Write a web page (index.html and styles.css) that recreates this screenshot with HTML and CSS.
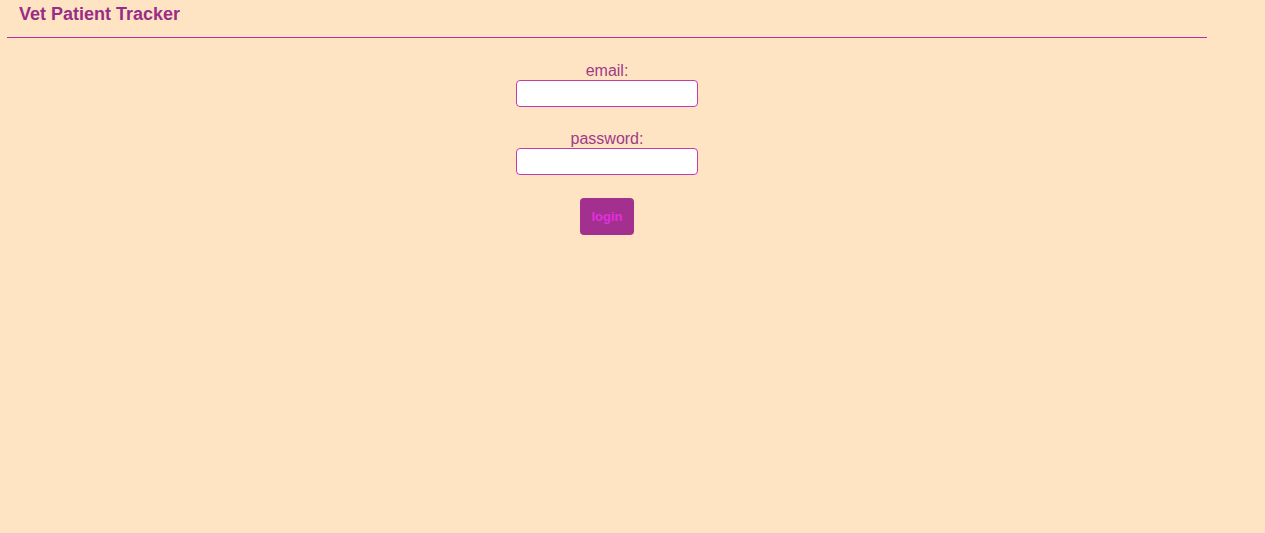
FILE: index.html
```html
<!DOCTYPE html>
<html lang="en">
<head>
<meta charset="utf-8">
<title>Vet Patient Tracker</title>
<link rel="stylesheet" href="styles.css">
</head>
<body>
<div class="page">
  <header class="header">
    <h1 class="title">Vet Patient Tracker</h1>
  </header>
  <form class="login-form">
    <div class="field">
      <label class="label" for="email">email:</label>
      <input class="input" id="email" type="text">
    </div>
    <div class="field">
      <label class="label" for="password">password:</label>
      <input class="input" id="password" type="password">
    </div>
    <button class="btn" type="button">login</button>
  </form>
</div>
</body>
</html>
```
FILE: styles.css
```css
html, body {
  margin: 0;
  padding: 0;
  background: #ffe4c4;
  font-family: "Liberation Sans", Arial, sans-serif;
}
.page {
  width: 1200px;
  margin-left: 7px;
}
.header {
  height: 33px;
  padding: 4px 0 0 12px;
  border-bottom: 1px solid #b8309c;
}
.title {
  margin: 0;
  font-size: 18px;
  line-height: 20px;
  font-weight: bold;
  color: #9b2c86;
}
.login-form {
  display: flex;
  flex-direction: column;
  align-items: center;
  padding-top: 23px;
}
.field {
  display: flex;
  flex-direction: column;
  align-items: center;
  margin-bottom: 22px;
}
.label {
  font-size: 16px;
  line-height: 19px;
  color: #a03a86;
}
.input {
  box-sizing: border-box;
  width: 182px;
  height: 27px;
  border: 1px solid #c23aae;
  border-radius: 4px;
  background: #fff;
  margin: 0;
  padding: 0 4px;
}
.btn {
  margin-top: 1px;
  width: 54px;
  height: 37px;
  border: none;
  border-radius: 4px;
  background: #a32f8e;
  color: #e22ee0;
  font-family: "Liberation Sans", Arial, sans-serif;
  font-size: 13px;
  font-weight: bold;
  padding: 0;
}
```
